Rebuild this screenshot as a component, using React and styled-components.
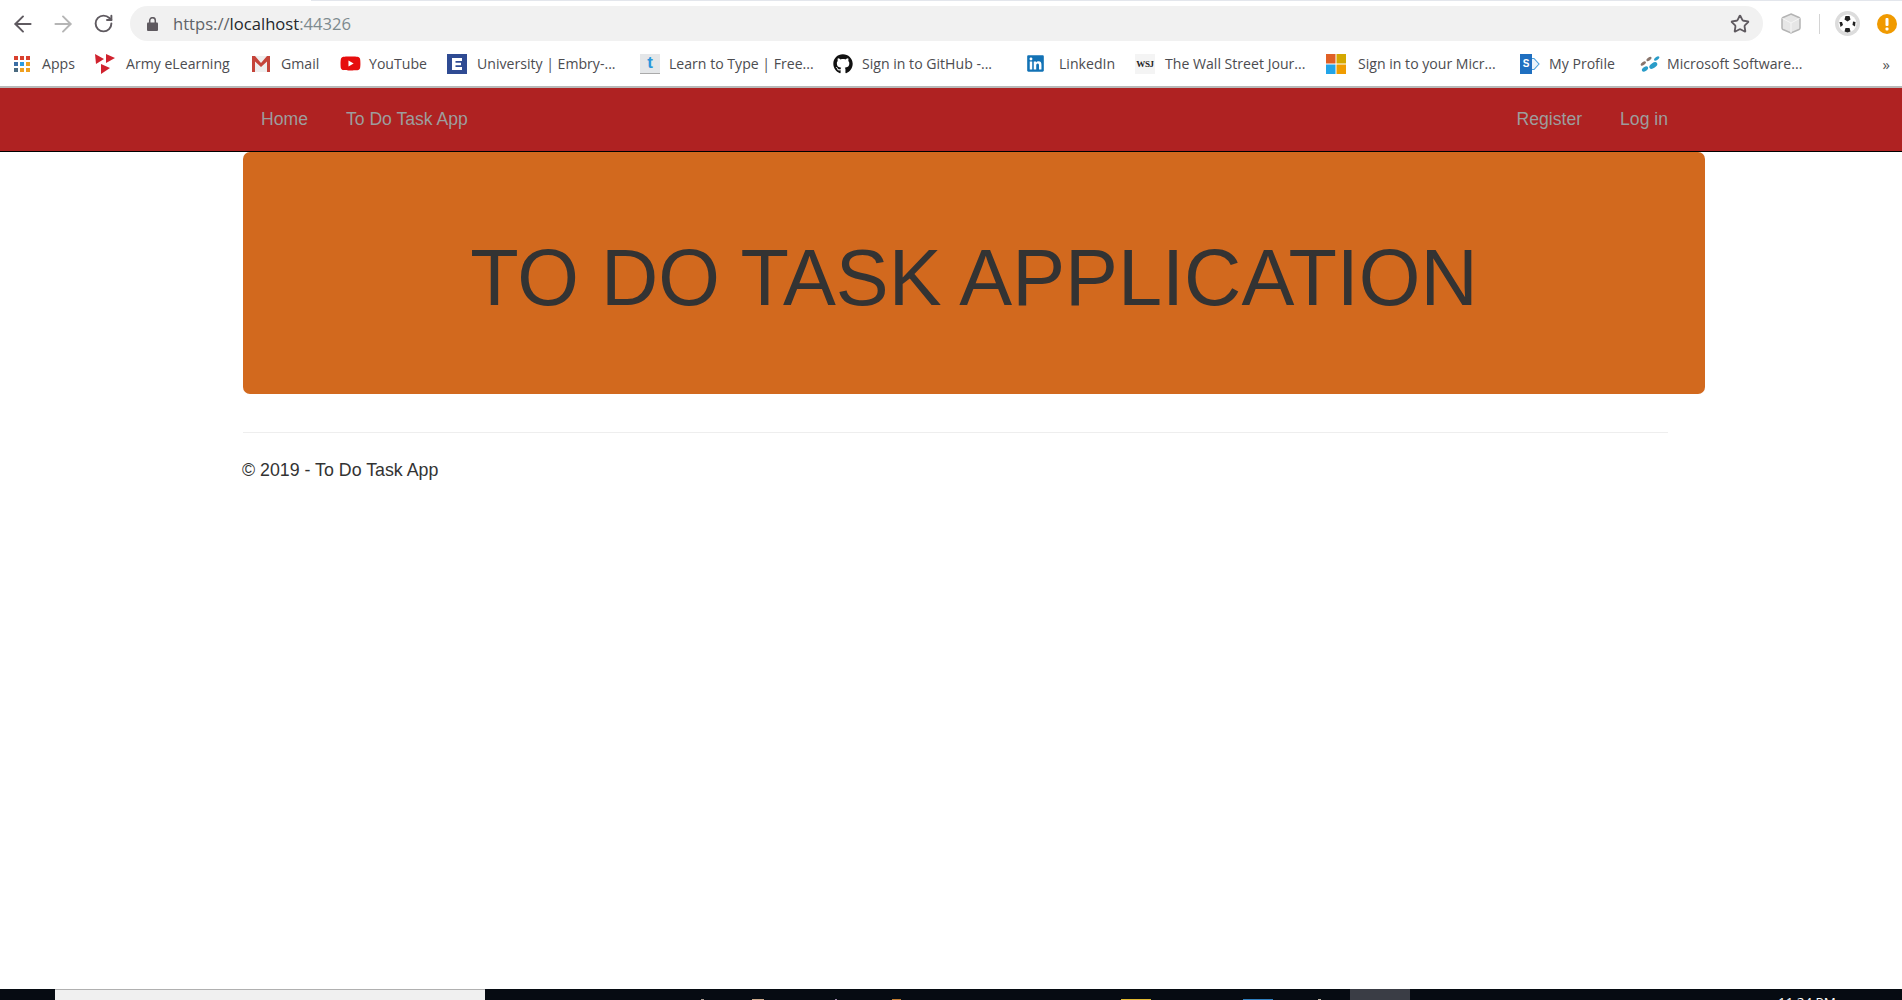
import React from 'react';
import styled, { createGlobalStyle } from 'styled-components';
import { ArrowLeft, ArrowRight, RotateCw, Star } from 'lucide-react';
import { FaGithub, FaLinkedin, FaYoutube } from 'react-icons/fa';

const Global = createGlobalStyle`
  html, body { margin: 0; padding: 0; background: #fff; overflow: hidden; }
  * { box-sizing: border-box; }
`;

const Page = styled.div`
  height: 1000px;
  display: flex;
  flex-direction: column;
  font-family: "Liberation Sans", Arial, sans-serif;
`;

// browser chrome
const Toolbar = styled.div`
  height: 47px;
  padding: 6px 0 0 3px;
  display: flex;
  align-items: flex-start;
  flex: none;
  background: linear-gradient(to right, #fff 311px, #e3e6ec 311px) top / 100% 1px no-repeat;
`;
const NavIcon = styled.div`
  width: 40px;
  height: 35px;
  display: flex;
  align-items: center;
  justify-content: center;
  flex: none;
  color: ${p => p.$color || '#5f5a60'};
`;
const Omnibox = styled.div`
  width: 1633px;
  height: 35px;
  margin-left: 7px;
  background: #f1f1f1;
  border-radius: 18px;
  display: flex;
  align-items: center;
  flex: none;
  padding: 0 13px 0 17px;
  color: #5f6368;
  font-family: "Open Sans", sans-serif;
  font-size: 16.6px;
`;
const Url = styled.div`
  margin-left: 15px;
  flex: 1;
`;
const Host = styled.span`
  color: #24282c;
`;
const Port = styled.span`
  color: #7d8a8e;
`;
const Extensions = styled.div`
  display: flex;
  align-items: center;
  height: 35px;
  flex: none;
  margin-left: 18px;
`;
const Divider = styled.div`
  width: 1px;
  height: 20px;
  background: #d4d4d4;
  margin: 0 15px 0 18px;
`;
const BallWrap = styled.div`
  margin-right: 17px;
  display: flex;
`;
const Bookmarks = styled.div`
  height: 41px;
  padding: 0 0 6px 14px;
  display: flex;
  align-items: center;
  flex: none;
  border-bottom: 2px solid #b9b9b9;
  font-family: "Open Sans", sans-serif;
  font-size: 14.1px;
  color: #4c4c50;
`;
const Bookmark = styled.div`
  width: ${p => p.$w}px;
  display: flex;
  align-items: center;
  white-space: nowrap;
  flex: none;
`;
const BookmarkIcon = styled.div`
  width: ${p => p.$gap || 29}px;
  height: 20px;
  display: flex;
  align-items: center;
  flex: none;
`;
const More = styled.div`
  margin-left: auto;
  padding-right: 12px;
  font-size: 15px;
  color: #555;
`;
const Tile = styled.div`
  width: 20px;
  height: 20px;
  background: #e4e6e8;
  border-bottom: 1px solid #aaa;
  color: #2a97dc;
  font: bold 17px "Liberation Sans", sans-serif;
  text-align: center;
  line-height: 18px;
`;
const WsjTile = styled.div`
  width: 20px;
  height: 20px;
  background: #f4f4f4;
  color: #222;
  font: bold 9px "Liberation Serif", serif;
  text-align: center;
  line-height: 20px;
  letter-spacing: -0.3px;
`;
const SpTile = styled.div`
  width: 20px;
  height: 20px;
  display: flex;
  align-items: center;
`;
const SpLetter = styled.div`
  width: 12px;
  height: 20px;
  background: #1f6fc0;
  color: #fff;
  font: bold 10px "Liberation Sans", sans-serif;
  text-align: center;
  line-height: 20px;
  flex: none;
`;

// site nav
const Navbar = styled.nav`
  height: 64px;
  background: #af2222;
  border-bottom: 1px solid #000;
  padding: 0 216px 0 243px;
  display: flex;
  justify-content: space-between;
  align-items: center;
  flex: none;
`;
const NavGroup = styled.div`
  display: flex;
  gap: 2px;
`;
const NavLink = styled.a`
  padding: 0 18px;
  font-size: 17.6px;
  color: #9d9d9d;
`;

// body
const Main = styled.main`
  flex: 1;
  padding-left: 243px;
`;
const Jumbotron = styled.div`
  width: 1462px;
  height: 242px;
  padding-top: 10px;
  background: #d2691e;
  border-radius: 7px;
  display: flex;
  align-items: center;
  justify-content: center;
`;
const Title = styled.h1`
  margin: 0;
  font-weight: 400;
  font-size: 79.3px;
  line-height: 1;
  color: #333;
`;
const Rule = styled.hr`
  width: 1425px;
  margin: 38px 0 0;
  border: 0;
  border-top: 1px solid #eee;
`;
const Footer = styled.p`
  margin: 27px 0 0 -1px;
  font-size: 17.8px;
  line-height: 20px;
  color: #333;
`;

// windows taskbar, mostly cut off by the bottom edge
const Taskbar = styled.div`
  height: 11px;
  flex: none;
  background: #060b12;
  display: flex;
  align-items: flex-end;
  overflow: hidden;
`;
const Search = styled.div`
  width: 430px;
  height: 11px;
  margin-left: 55px;
  background: #f0f0f0;
  border-top: 1px solid #b0b0b0;
  flex: none;
`;
const Sliver = styled.div`
  width: ${p => p.$w}px;
  height: ${p => p.$h || 1}px;
  margin-left: ${p => p.$ml}px;
  background: ${p => p.$c};
  flex: none;
`;
const Clock = styled.div`
  margin-left: 368px;
  align-self: flex-start;
  margin-top: 5px;
  color: #fff;
  font-family: "Open Sans", sans-serif;
  font-size: 13.4px;
  line-height: 17px;
  white-space: nowrap;
  flex: none;
`;

const AppsIcon = () => (
  <svg width="16" height="16" viewBox="0 0 16 16">
    {['#d9402e', '#d9402e', '#d9402e', '#3b6ea5', '#2c9be0', '#f0a020', '#4a6a80', '#f0a020', '#f0a020'].map((c, i) => (
      <rect key={i} x={(i % 3) * 6} y={Math.floor(i / 3) * 6} width="4" height="4" fill={c} />
    ))}
  </svg>
);
const ArmyIcon = () => (
  <svg width="20" height="20" viewBox="0 0 20 20" fill="#d0222e">
    <polygon points="0,0 9,5 1,10" />
    <polygon points="11,0 20,4 11,9" />
    <polygon points="6,10 15,14 6,20" />
  </svg>
);
const GmailIcon = () => (
  <svg width="18" height="16" viewBox="0 0 18 16">
    <rect width="18" height="16" fill="#eee" />
    <path d="M0 0h3l6 7 6-7h3v16h-3V5.500L9 11 3 5.500V16H0z" fill="#c5443a" />
  </svg>
);
const EmbryIcon = () => (
  <svg width="20" height="20" viewBox="0 0 20 20">
    <rect width="20" height="20" fill="#2f4b93" />
    <path d="M5 4h10v3H8.500v1.700H14v2.600H8.500V13H15v3H5z" fill="#fff" />
  </svg>
);
const WindowsIcon = () => (
  <svg width="20" height="20" viewBox="0 0 20 20">
    <rect width="9.500" height="9.500" fill="#e06026" />
    <rect x="10.500" width="9.500" height="9.500" fill="#d4a800" />
    <rect y="10.500" width="9.500" height="9.500" fill="#22a4e8" />
    <rect x="10.500" y="10.500" width="9.500" height="9.500" fill="#f09c00" />
  </svg>
);
const SoftwareIcon = () => (
  <svg width="20" height="20" viewBox="0 0 20 20">
    <g fill="#2a9cc8">
      <ellipse cx="5" cy="15" rx="3.500" ry="2" transform="rotate(-35 5 15)" />
      <ellipse cx="13.300" cy="11.500" rx="4.500" ry="2.500" transform="rotate(-35 13.300 11.500)" />
      <ellipse cx="16.700" cy="4.500" rx="3" ry="1.500" transform="rotate(-35 16.700 4.500)" />
    </g>
    <g fill="#8a756c">
      <ellipse cx="3.300" cy="9.500" rx="3" ry="1.500" transform="rotate(-35 3.300 9.500)" />
      <ellipse cx="9" cy="5" rx="3" ry="1.500" transform="rotate(-35 9 5)" />
    </g>
  </svg>
);
const SharePointChevron = () => (
  <svg width="8" height="14" viewBox="0 0 8 14">
    <path d="M0 1.500h2l5 5.500-5 5.500H0" fill="#eaf4fb" stroke="#4aa0dc" strokeWidth="1.100" />
  </svg>
);
const LockIcon = () => (
  <svg width="11" height="14" viewBox="0 0 11 14" fill="#5f5a60" style={{ flex: 'none' }}>
    <rect x="0" y="5.500" width="11" height="8.500" rx="1" />
    <path d="M2.700 6V3.500a2.800 2.800 0 0 1 5.600 0V6" fill="none" stroke="#5f5a60" strokeWidth="1.500" />
  </svg>
);
const CubeIcon = () => (
  <svg width="20" height="21" viewBox="0 0 20 21">
    <path d="M10 1l8 3.500q1 .5 1 1.500v9q0 1-1 1.500L10 20l-8-3.500q-1-.5-1-1.500V6q0-1 1-1.500z" fill="#e6e6e6" stroke="#b4b4b4" strokeWidth="1.500" />
    <path d="M10 10l8.500-4.500M10 10L1.500 5.500M10 10v10" stroke="#f6f6f6" fill="none" />
  </svg>
);
const BallIcon = () => (
  <svg width="25" height="25" viewBox="0 0 25 25">
    <circle cx="12.500" cy="12.500" r="12.500" fill="#dcdcdc" />
    <circle cx="12.500" cy="12.500" r="9" fill="#fff" />
    <polygon points="10.500,5 14.500,5 15.500,8.500 12.500,10.500 9.500,8.500" fill="#222" />
    <polygon points="4.500,11 7,11 8,14 5.500,16" fill="#222" />
    <polygon points="18,10.500 20.500,11 20,15.500 17.500,14" fill="#222" />
    <polygon points="10.500,17 14.500,17 15.500,20.500 12.500,21.500 9.500,20.500" fill="#222" />
  </svg>
);
const AlertIcon = () => (
  <svg width="20" height="20" viewBox="0 0 20 20">
    <circle cx="10" cy="10" r="10" fill="#f09a00" />
    <rect x="8.500" y="4" width="3" height="8" rx="1" fill="#fff" />
    <rect x="8.500" y="13.500" width="3" height="3" rx="1" fill="#fff" />
  </svg>
);

const bookmarks = [
  { w: 81, gap: 28, icon: <AppsIcon />, label: 'Apps' },
  { w: 157, gap: 31, icon: <ArmyIcon />, label: 'Army eLearning' },
  { w: 88, icon: <GmailIcon />, label: 'Gmail' },
  { w: 107, icon: <FaYoutube size={21} color="#e60d0d" />, label: 'YouTube' },
  { w: 193, gap: 30, icon: <EmbryIcon />, label: 'University | Embry-...' },
  { w: 193, icon: <Tile>t</Tile>, label: 'Learn to Type | Free...' },
  { w: 193, icon: <FaGithub size={20} color="#111" />, label: 'Sign in to GitHub -...' },
  { w: 109, gap: 33, icon: <FaLinkedin size={19} color="#1272b5" />, label: 'LinkedIn' },
  { w: 191, gap: 30, icon: <WsjTile>WSJ</WsjTile>, label: 'The Wall Street Jour...' },
  { w: 194, gap: 32, icon: <WindowsIcon />, label: 'Sign in to your Micr...' },
  { w: 120, icon: <SpTile><SpLetter>S</SpLetter><SharePointChevron /></SpTile>, label: 'My Profile' },
  { w: 200, gap: 27, icon: <SoftwareIcon />, label: 'Microsoft Software...' },
];

export default function App() {
  return (
    <Page>
      <Global />
      <Toolbar>
        <NavIcon><ArrowLeft size={26} strokeWidth={1.8} /></NavIcon>
        <NavIcon $color="#b5b5b5"><ArrowRight size={26} strokeWidth={1.8} /></NavIcon>
        <NavIcon><RotateCw size={21} strokeWidth={2.2} /></NavIcon>
        <Omnibox>
          <LockIcon />
          <Url>https://<Host>localhost</Host><Port>:44326</Port></Url>
          <Star size={20} color="#5f5a60" strokeWidth={2.2} />
        </Omnibox>
        <Extensions>
          <CubeIcon />
          <Divider />
          <BallWrap><BallIcon /></BallWrap>
          <AlertIcon />
        </Extensions>
      </Toolbar>
      <Bookmarks>
        {bookmarks.map(b => (
          <Bookmark key={b.label} $w={b.w}>
            <BookmarkIcon $gap={b.gap}>{b.icon}</BookmarkIcon>
            {b.label}
          </Bookmark>
        ))}
        <More>»</More>
      </Bookmarks>
      <Navbar>
        <NavGroup>
          <NavLink>Home</NavLink>
          <NavLink>To Do Task App</NavLink>
        </NavGroup>
        <NavGroup>
          <NavLink>Register</NavLink>
          <NavLink>Log in</NavLink>
        </NavGroup>
      </Navbar>
      <Main>
        <Jumbotron>
          <Title>TO DO TASK APPLICATION</Title>
        </Jumbotron>
        <Rule />
        <Footer>© 2019 - To Do Task App</Footer>
      </Main>
      <Taskbar>
        <Search />
        <Sliver $ml={216} $w={3} $c="#a89a90" />
        <Sliver $ml={48} $w={12} $c="#c9a88a" />
        <Sliver $ml={71} $w={2} $c="#9a86a8" />
        <Sliver $ml={55} $w={9} $c="#c07c30" />
        <Sliver $ml={220} $w={30} $c="#e0b830" />
        <Sliver $ml={92} $w={30} $c="#2f80c0" />
        <Sliver $ml={45} $w={3} $c="#c0b8a8" />
        <Sliver $ml={29} $w={60} $h={11} $c="#3a3d45" />
        <Clock>11:24 PM</Clock>
      </Taskbar>
    </Page>
  );
}
